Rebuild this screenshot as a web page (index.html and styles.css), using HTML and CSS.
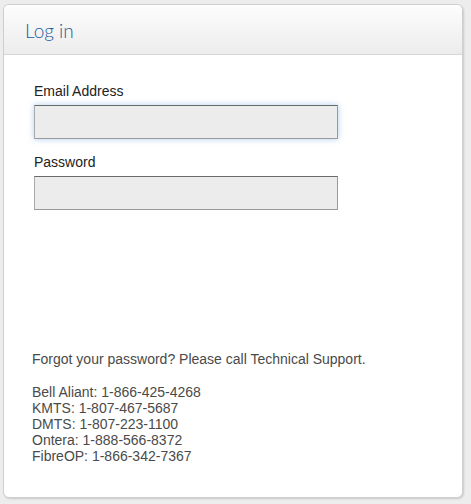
FILE: index.html
```html
<!DOCTYPE html>
<html>
<head>
<meta charset="utf-8">
<link rel="stylesheet" href="styles.css">
</head>
<body>
<div class="panel">
  <div class="panel-head"><h1 class="title">Log in</h1></div>
  <div class="panel-body">
    <form class="form">
      <label class="label" for="email">Email Address</label>
      <input class="input input-focus" id="email" type="text">
      <label class="label" for="pw">Password</label>
      <input class="input" id="pw" type="password">
    </form>
    <div class="help">
      <p class="forgot">Forgot your password? Please call Technical Support.</p>
      <p class="phones">Bell Aliant: 1-866-425-4268<br>KMTS: 1-807-467-5687<br>DMTS: 1-807-223-1100<br>Ontera: 1-888-566-8372<br>FibreOP: 1-866-342-7367</p>
    </div>
  </div>
</div>
</body>
</html>
```
FILE: styles.css
```css
html, body { margin: 0; padding: 0; }
body {
  background: #ededed;
  font-family: "Liberation Sans", Arial, sans-serif;
  width: 471px;
  height: 504px;
  padding: 4px 0 0 3px;
  box-sizing: border-box;
}
.panel {
  width: 460px;
  height: 494px;
  box-sizing: border-box;
  background: #fff;
  border: 1px solid #cfcfcf;
  border-radius: 6px;
  box-shadow: 1px 1px 2px rgba(0,0,0,0.15);
  display: flex;
  flex-direction: column;
  overflow: hidden;
}
.panel-head {
  height: 50px;
  box-sizing: border-box;
  background: linear-gradient(#fdfdfd, #ececec);
  border-bottom: 1px solid #d6d6d6;
  display: flex;
  align-items: center;
  padding-left: 21px;
}
.title {
  margin: 0;
  font-family: "Lato", "Open Sans", sans-serif;
  font-weight: 300;
  font-size: 19px;
  color: #245aa0;
  padding-top: 2px;
}
.panel-body {
  flex: 1;
  display: flex;
  flex-direction: column;
  justify-content: space-between;
  padding: 28px 0 33px 30px;
}
.form { display: flex; flex-direction: column; align-items: flex-start; }
.label {
  font-size: 14px;
  color: #222;
  line-height: 16px;
  margin-bottom: 6px;
}
.input {
  width: 304px;
  height: 34px;
  box-sizing: border-box;
  background: #ececec;
  border: 1px solid #9a9a9a;
  border-top-color: #6a6a6a;
  border-left-color: #aaa;
  margin: 0 0 15px 0;
  padding: 0;
}
.input-focus {
  box-shadow: 0 0 6px rgba(120,170,230,0.6);
}
.help { font-size: 14px; color: #4a4a4a; margin-left: -2px; }
.forgot { margin: 0 0 17px 0; line-height: 16px; }
.phones { margin: 0; line-height: 16px; }
```
